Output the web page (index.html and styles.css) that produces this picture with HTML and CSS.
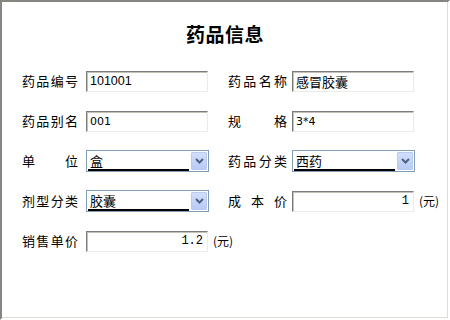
FILE: index.html
```html
<!DOCTYPE html>
<html lang="zh-CN">
<head>
<meta charset="utf-8">
<title>药品信息</title>
<link rel="stylesheet" href="styles.css">
</head>
<body>
<div class="frame">
  <h1 class="title">药品信息</h1>
  <div class="form">
    <div class="row">
      <div class="field">
        <span class="label">药品编号</span>
        <div class="input">101001</div>
      </div>
      <div class="field right">
        <span class="label">药品名称</span>
        <div class="input cjk">感冒胶囊</div>
      </div>
    </div>
    <div class="row">
      <div class="field">
        <span class="label">药品别名</span>
        <div class="input small">001</div>
      </div>
      <div class="field right">
        <span class="label">规格</span>
        <div class="input small">3*4</div>
      </div>
    </div>
    <div class="row">
      <div class="field">
        <span class="label">单位</span>
        <div class="select"><span class="sel-text">盒</span><span class="sel-btn"><svg width="9" height="6" viewBox="0 0 9 6"><path d="M1 1 L4.5 4.5 L8 1" fill="none" stroke="#4d6185" stroke-width="2"/></svg></span></div>
      </div>
      <div class="field right">
        <span class="label">药品分类</span>
        <div class="select"><span class="sel-text">西药</span><span class="sel-btn"><svg width="9" height="6" viewBox="0 0 9 6"><path d="M1 1 L4.5 4.5 L8 1" fill="none" stroke="#4d6185" stroke-width="2"/></svg></span></div>
      </div>
    </div>
    <div class="row">
      <div class="field">
        <span class="label">剂型分类</span>
        <div class="select"><span class="sel-text">胶囊</span><span class="sel-btn"><svg width="9" height="6" viewBox="0 0 9 6"><path d="M1 1 L4.5 4.5 L8 1" fill="none" stroke="#4d6185" stroke-width="2"/></svg></span></div>
      </div>
      <div class="field right">
        <span class="label">成本价</span>
        <div class="input num">1</div>
        <span class="unit">(元)</span>
      </div>
    </div>
    <div class="row">
      <div class="field">
        <span class="label">销售单价</span>
        <div class="input num">1.2</div>
        <span class="unit">(元)</span>
      </div>
    </div>
  </div>
</div>
</body>
</html>
```
FILE: styles.css
```css
html, body {
  margin: 0;
  padding: 0;
  background: #fff;
}
body {
  width: 450px;
  height: 320px;
  overflow: hidden;
  font-family: "Noto Sans CJK SC", "Liberation Sans", sans-serif;
  color: #000;
}
.frame {
  box-sizing: border-box;
  width: 450px;
  height: 320px;
  background: #fff;
  border-left: 2px solid #868682;
  border-top: 2px solid #868682;
  border-right: 2px solid #fff;
  border-bottom: 2px solid #fff;
  box-shadow: inset -1px -1px 0 #dedcd2;
  padding: 20px 0 0 20px;
}
.title {
  margin: 0;
  height: 24px;
  line-height: 24px;
  font-size: 19px;
  font-weight: 700;
  text-align: center;
  padding-right: 20px;
  letter-spacing: 0.5px;
}
.form {
  margin-top: 24px;
}
.row {
  display: flex;
  align-items: center;
  height: 22px;
  margin-bottom: 18px;
}
.field {
  display: flex;
  align-items: center;
  width: 206px;
  flex-shrink: 0;
}
.label {
  width: 56px;
  margin-right: 8px;
  font-size: 13px;
  line-height: 16px;
  text-align: justify;
  text-align-last: justify;
  flex-shrink: 0;
}
.right .label {
  width: 59px;
  margin-right: 5px;
}
.input {
  box-sizing: border-box;
  width: 122px;
  height: 21px;
  flex-shrink: 0;
  border: 1px solid;
  border-color: #7c7c78 #ecebe4 #ecebe4 #7c7c78;
  box-shadow: inset 1px 1px 0 #c4c2b8;
  background: #fff;
  padding: 0 3px;
  font-family: "Liberation Sans", sans-serif;
  font-size: 12.5px;
  line-height: 19px;
  white-space: nowrap;
}
.input.cjk {
  font-family: "Noto Sans CJK SC", sans-serif;
  font-size: 13px;
}
.input.small {
  font-family: "DejaVu Sans", sans-serif;
  font-size: 11px;
}
.input.num {
  text-align: right;
  font-family: "Liberation Mono", monospace;
  font-size: 12px;
  padding-right: 4px;
}
.unit {
  margin-left: 5px;
  font-size: 12px;
  line-height: 16px;
  white-space: nowrap;
}
.select {
  box-sizing: border-box;
  width: 123px;
  height: 22px;
  flex-shrink: 0;
  border: 1px solid #7f9db9;
  background: #fff;
  display: flex;
  align-items: center;
  padding: 0 1px 0 1px;
}
.sel-text {
  box-sizing: border-box;
  width: 101px;
  height: 18px;
  padding-left: 2px;
  font-size: 13px;
  line-height: 15px;
  border-bottom: 2px solid #000;
  margin-top: 1px;
}
.sel-btn {
  box-sizing: border-box;
  margin-left: auto;
  width: 16px;
  height: 18px;
  border: 1px solid #b9c9ef;
  border-radius: 1px;
  background: linear-gradient(#d2defb, #b8cbf6);
  display: flex;
  align-items: center;
  justify-content: center;
}
```
